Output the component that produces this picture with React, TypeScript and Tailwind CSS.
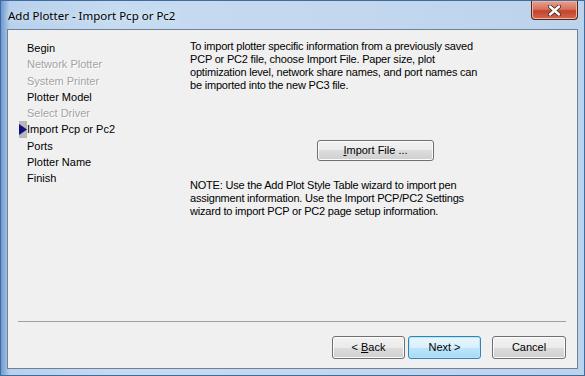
import React from "react";

interface Step {
  label: string;
  disabled?: boolean;
  active?: boolean;
}

const steps: Step[] = [
  { label: "Begin" },
  { label: "Network Plotter", disabled: true },
  { label: "System Printer", disabled: true },
  { label: "Plotter Model" },
  { label: "Select Driver", disabled: true },
  { label: "Import Pcp or Pc2", active: true },
  { label: "Ports" },
  { label: "Plotter Name" },
  { label: "Finish" },
];

function WinButton({
  children,
  width,
  primary,
}: {
  children: React.ReactNode;
  width: string;
  primary?: boolean;
}) {
  const base =
    "flex h-full items-center justify-center rounded-[3px] border text-[11px] text-black ";
  const look = primary
    ? "border-[#3c7fb1] bg-[linear-gradient(#eaf6fd_0%,#d9f0fc_50%,#bee6fd_50%,#a7d9f5_100%)] shadow-[inset_0_0_0_1px_#aeeaff]"
    : "border-[#707070] bg-[linear-gradient(#f2f2f2_0%,#ebebeb_50%,#dddddd_50%,#cfcfcf_100%)] shadow-[inset_0_0_0_1px_#fbfbfb]";
  return <button className={base + look + " " + width}>{children}</button>;
}

export default function App() {
  return (
    <div className="flex h-[376px] w-[585px] flex-col border border-[#3f6b9f] bg-[linear-gradient(90deg,#6f9ad0_0%,#b7d0ec_1.5%,#c6dbf1_20%,#c3d8ef_60%,#bcd3ec_100%)] px-[6px] pb-[6px] font-['Liberation_Sans',Arial,sans-serif]">
      {/* title bar */}
      <div className="flex h-[28px] items-start justify-between">
        <span className="mt-[7px] pl-[1px] font-['Noto_Sans',sans-serif] text-[11.5px] leading-[16px] text-black [text-shadow:0_0_6px_#e8f1fb]">
          Add Plotter - Import Pcp or Pc2
        </span>
        <div className="flex h-[19px] w-[47px] items-center justify-center rounded-b-[4px] border border-t-0 border-[#5a2019] bg-[linear-gradient(#e8a08f_0%,#d7735e_45%,#c4432c_55%,#d2674f_100%)] shadow-[inset_0_0_0_1px_#eeb4a6]">
          <svg width="13" height="11" viewBox="0 0 13 11">
            <path d="M2 1.5 L11 9.5 M11 1.5 L2 9.5" stroke="#4a2a26" strokeWidth="4.2" strokeLinecap="round" />
            <path d="M2 1.5 L11 9.5 M11 1.5 L2 9.5" stroke="#ffffff" strokeWidth="2.4" strokeLinecap="round" />
          </svg>
        </div>
      </div>

      {/* client area */}
      <div className="flex flex-1 flex-col border border-[#6f8197] bg-[#f0f0f0]">
        <div className="flex h-[291px]">
          <div className="w-[182px] pt-[10px]">
            {steps.map((s) => (
              <div key={s.label} className="flex h-[16.25px] items-center">
                <div className="ml-[11px] flex h-[16.25px] w-[8px] items-center">
                  {s.active && (
                    <div className="flex h-[17px] w-[8px] items-center bg-[#b8b8b8]">
                      <svg width="8" height="11" viewBox="0 0 8 11">
                        <path d="M0 0 L8 5.5 L0 11 Z" fill="#12127e" />
                      </svg>
                    </div>
                  )}
                </div>
                <span
                  className={
                    s.disabled
                      ? "text-[11px] leading-[16px] text-[#a3a3a3] [text-shadow:1px_1px_0_#ffffff]"
                      : "text-[11px] leading-[16px] text-black"
                  }
                >
                  {s.label}
                </span>
              </div>
            ))}
          </div>

          <div className="flex flex-col pt-[10px] text-[11px] leading-[13px] tracking-[-0.2px] text-black">
            <p>
              To import plotter specific information from a previously saved
              <br />
              PCP or PC2 file, choose Import File. Paper size, plot
              <br />
              optimization level, network share names, and port names can
              <br />
              be imported into the new PC3 file.
            </p>
            <div className="ml-[127px] mt-[48px] h-[21px] tracking-normal">
              <WinButton width="w-[117px]">
                <span>
                  <span className="underline">I</span>mport File ...
                </span>
              </WinButton>
            </div>
            <p className="mt-[18px]">
              NOTE: Use the Add Plot Style Table wizard to import pen
              <br />
              assignment information. Use the Import PCP/PC2 Settings
              <br />
              wizard to import PCP or PC2 page setup information.
            </p>
          </div>
        </div>

        <div className="ml-[10px] mr-[11px] h-px bg-[#a0a0a0]" />

        <div className="mr-[11px] mt-[14px] flex h-[23px] justify-end">
          <WinButton width="w-[73px]">
            <span>
              &lt; <span className="underline">B</span>ack
            </span>
          </WinButton>
          <div className="ml-[3px] h-full">
            <WinButton width="w-[73px]" primary>
              Next &gt;
            </WinButton>
          </div>
          <div className="ml-[11px] h-full">
            <WinButton width="w-[74px]">Cancel</WinButton>
          </div>
        </div>
      </div>
    </div>
  );
}
